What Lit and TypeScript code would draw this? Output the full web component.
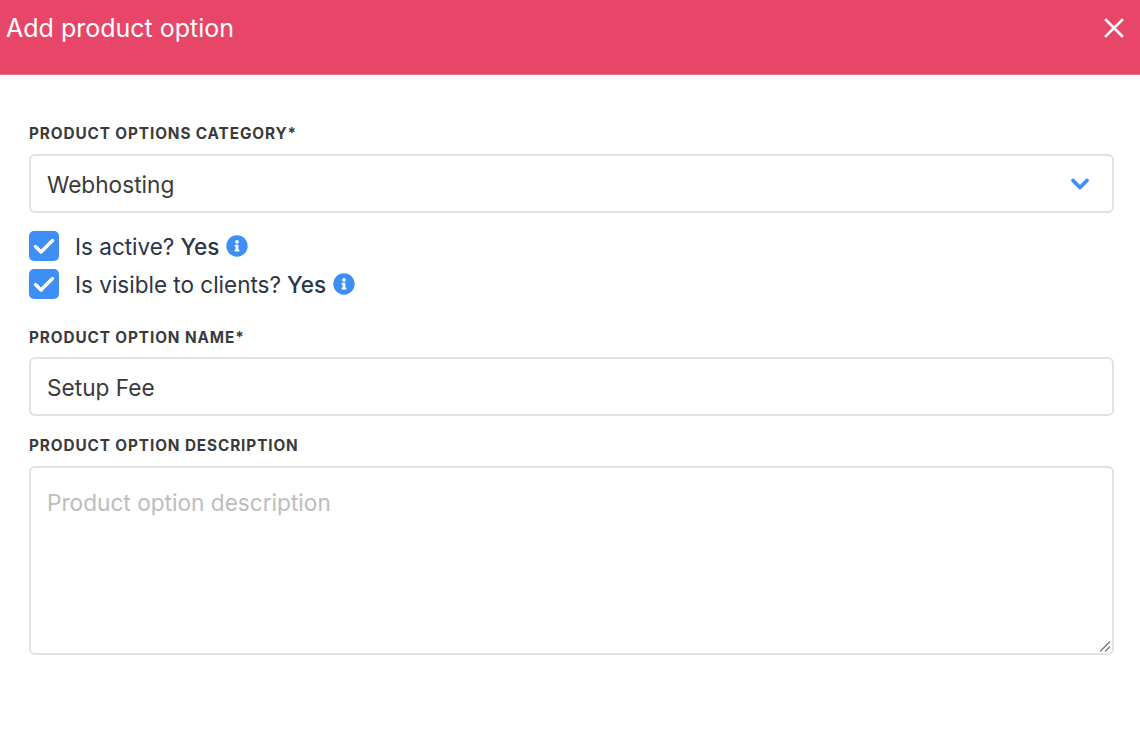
import { LitElement, html, css } from "lit";
import { customElement } from "lit/decorators.js";

const check = html`<span class="box"><svg width="30" height="30" viewBox="0 0 30 30"><path d="M6.500 15.500l5.500 5.500L23.500 9.500" fill="none" stroke="#fff" stroke-width="3.400" stroke-linecap="round" stroke-linejoin="round"/></svg></span>`;
const info = html`<svg class="info" width="22" height="22" viewBox="0 0 512 512"><path fill="#3F8EF5" d="M256 8C119 8 8 119 8 256s111 248 248 248 248-111 248-248S393 8 256 8zm0 110c23.200 0 42 18.800 42 42s-18.800 42-42 42-42-18.800-42-42 18.800-42 42-42zm56 254c0 6.600-5.400 12-12 12h-88c-6.600 0-12-5.400-12-12v-24c0-6.600 5.400-12 12-12h12v-64h-12c-6.600 0-12-5.400-12-12v-24c0-6.600 5.400-12 12-12h64c6.600 0 12 5.400 12 12v100h12c6.600 0 12 5.400 12 12v24z"/></svg>`;

@customElement("app-root")
export class AppRoot extends LitElement {
  static styles = css`
    :host { display: block; width: 1140px; height: 730px; background: #fff; overflow: hidden; font-family: Inter, "Liberation Sans", sans-serif; }
    .head { height: 75px; box-sizing: border-box; background: #E84668; border-bottom: 1px solid #ee6d86; color: #fff; display: flex; align-items: flex-start; justify-content: space-between; padding: 13px 16px 0 6px; }
    .title { font-size: 25px; line-height: 30px; font-weight: 400; }
    .close { display: block; margin-top: 5px; }
    .body { padding: 49px 26px 0 29px; display: flex; flex-direction: column; }
    .label { font-size: 15.300px; line-height: 20px; font-weight: 700; letter-spacing: 0.900px; color: #3a3a3a; text-transform: uppercase; }
    .field { box-sizing: border-box; border: 2px solid #e2e2e2; border-radius: 6px; height: 59px; margin-top: 10px; padding: 1px 22px 0 16px; display: flex; align-items: center; justify-content: space-between; font-size: 22.650px; color: #3a3a3a; }
    .checks { display: flex; flex-direction: column; gap: 8px; margin-top: 18px; }
    .row { display: flex; align-items: center; height: 30px; font-size: 22.500px; color: #2a3547; }
    .box { width: 30px; height: 30px; border-radius: 5px; background: #3F8EF5; margin-right: 16px; display: block; }
    .box svg { display: block; }
    .yes { font-weight: 500; margin-left: 6px; }
    .info { margin-left: 7px; display: block; }
    .l2 { margin-top: 29px; }
    .name { margin-top: 9px; }
    .l3 { margin-top: 20px; }
    .area { height: 189px; align-items: flex-start; padding-top: 21px; color: #bdbdbd; position: relative; line-height: 28px; }
    .grip { position: absolute; right: 0; bottom: 0; display: block; }
  `;
  render() {
    return html`
      <div class="head">
        <div class="title">Add product option</div>
        <svg class="close" width="20" height="20" viewBox="0 0 20 20"><path d="M2 2l16 16M18 2L2 18" stroke="#fff" stroke-width="2.600" fill="none" stroke-linecap="square"/></svg>
      </div>
      <div class="body">
        <div class="label">Product options category*</div>
        <div class="field"><span>Webhosting</span>
          <svg width="20" height="14" viewBox="0 0 20 14"><path d="M3 3.500l7 7 7-7" fill="none" stroke="#3F8EF5" stroke-width="3.800" stroke-linecap="round" stroke-linejoin="round"/></svg>
        </div>
        <div class="checks">
          <div class="row">${check}<span>Is active?</span><span class="yes">Yes</span>${info}</div>
          <div class="row">${check}<span>Is visible to clients?</span><span class="yes">Yes</span>${info}</div>
        </div>
        <div class="label l2">Product option name*</div>
        <div class="field name"><span>Setup Fee</span></div>
        <div class="label l3">Product option description</div>
        <div class="field area"><span>Product option description</span>
          <svg class="grip" width="14" height="14" viewBox="0 0 14 14"><path d="M2 12.500L12 2.500M7 12.500l5-5" stroke="#777" stroke-width="1.200" fill="none"/></svg>
        </div>
      </div>`;
  }
}
